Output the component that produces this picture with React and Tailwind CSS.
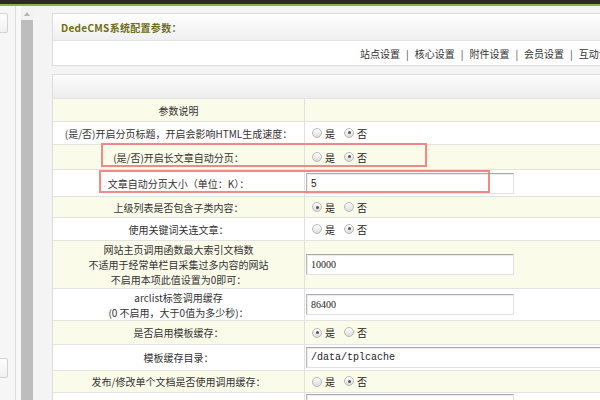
import React from 'react';

const cjk = "font-['Noto_Sans_CJK_SC','Liberation_Sans',sans-serif]";

function Radio({ checked }) {
  return (
    <span className="relative inline-block w-[10px] h-[10px] rounded-full border border-[#b9b9b9] bg-gradient-to-b from-[#fdfdfd] to-[#dcdcdc]">
      {checked && <span className="absolute left-[2.5px] top-[2.5px] w-[3px] h-[3px] rounded-full bg-[#555]" />}
    </span>
  );
}

function YesNo({ yes }) {
  return (
    <div className="flex items-center text-[10px] text-[#222]">
      <Radio checked={yes} />
      <span className="ml-[3px]">是</span>
      <span className="ml-[9px]"><Radio checked={!yes} /></span>
      <span className="ml-[3px]">否</span>
    </div>
  );
}

function Field({ value, width = 208, font = "font-['Liberation_Sans',sans-serif]" }) {
  return (
    <div
      className={`h-[21px] bg-white border border-t-[#a9a9a9] border-l-[#b8b8b8] border-r-[#e2e2e2] border-b-[#e2e2e2] shadow-[inset_1px_1px_1px_rgba(0,0,0,0.08)] flex items-center pl-[4px] text-[10px] text-[#222] ${font}`}
      style={{ width }}
    >
      {value}
    </div>
  );
}

const rows = [
  { label: ['(是/否)开启分页标题，开启会影响HTML生成速度：'], h: 23, yes: false },
  { label: ['(是/否)开启长文章自动分页：'], h: 25, yes: false },
  { label: ['文章自动分页大小（单位：K）：'], h: 27, input: '5' },
  { label: ['上级列表是否包含子类内容：'], h: 21, yes: true },
  { label: ['使用关键词关连文章：'], h: 23, yes: false },
  { label: ['网站主页调用函数最大索引文档数', '不适用于经常单栏目采集过多内容的网站', '不启用本项此值设置为0即可：'], h: 48, input: '10000', serif: true },
  { label: ['arclist标签调用缓存', '(0 不启用，大于0值为多少秒)：'], h: 32, input: '86400', serif: true },
  { label: ['是否启用模板缓存：'], h: 24, yes: true },
  { label: ['模板缓存目录：'], h: 26, input: '/data/tplcache', mono: true, wide: true },
  { label: ['发布/修改单个文档是否使用调用缓存：'], h: 22, yes: false },
  { label: [''], h: 24, input: '' },
];

export default function App() {
  return (
    <div className={`relative w-[600px] h-[400px] overflow-hidden bg-[#f4f4f4] flex flex-col ${cjk}`}>
      <div className="h-[4px] bg-[#2a2a28] shrink-0" />
      <div className="h-[2px] bg-[#8cb33f] shrink-0" />

      <div className="flex flex-1 min-h-0">
        {/* left frame edge */}
        <div className="w-[16px] shrink-0 bg-[#f6f6f6] border-r border-[#dcdcdc] relative">
          <div className="absolute left-[-10px] top-[7px] w-[18px] h-[20px] border border-[#d2d2d2] bg-gradient-to-b from-white to-[#f0f0f0] rounded-[2px]" />
          <div className="absolute left-[-10px] top-[352px] w-[18px] h-[20px] border border-[#d2d2d2] bg-gradient-to-b from-white to-[#f0f0f0] rounded-[2px]" />
        </div>
        <div className="w-[5px] shrink-0 bg-[#f8f8f8]" />
        {/* scrollbar */}
        <div className="w-[12px] shrink-0 flex flex-col bg-[#f2f2f2]">
          <div className="h-[14px] flex items-center justify-center pt-[2px]">
            <svg width="6" height="4" viewBox="0 0 6 4"><path d="M0 4 L3 0 L6 4 Z" fill="#b5b5b5" /></svg>
          </div>
          <div className="flex-1 bg-[#bdbdbd]" />
        </div>
        <div className="w-[19px] shrink-0 bg-[#f4f4f4]" />

        {/* main */}
        <div className="flex-1 min-w-0 pt-[7px]">
          <div className="w-[620px] border border-[#dddddd] bg-white">
            <div className="h-[27px] bg-gradient-to-b from-white to-[#efefef] border-b border-[#e4e4e4] flex items-center pl-[8px]">
              <span className="text-[10px] font-bold text-[#6e6e14] tracking-[0.3px]">DedeCMS系统配置参数：</span>
            </div>
            <div className="h-[24px] flex items-center pl-[307px] text-[10px] text-[#333] whitespace-nowrap">
              {['站点设置', '核心设置', '附件设置', '会员设置', '互动设置'].map((t, i) => (
                <React.Fragment key={t}>
                  {i > 0 && <span className="mx-[6px] text-[#444]">|</span>}
                  <span>{t}</span>
                </React.Fragment>
              ))}
            </div>
          </div>

          <div className="mt-[8px] w-[620px] border border-[#dddddd] bg-white">
            <div className="h-[24px] bg-gradient-to-b from-[#fcfcfc] to-[#ededed] border-b border-[#e2e2e2]" />
            <div className="grid grid-cols-[252px_1fr] h-[23px] bg-[#fafbe9] border-b border-[#e3e3e3]">
              <div className="border-r border-[#e0e0e0] flex items-center justify-center text-[10px] text-[#333]">参数说明</div>
              <div />
            </div>
            {rows.map((r, i) => (
              <div
                key={i}
                className={`grid grid-cols-[252px_1fr] border-b border-[#e3e3e3] ${i % 2 === 0 ? 'bg-white' : 'bg-[#fafbe9]'}`}
                style={{ height: r.h }}
              >
                <div className="border-r border-[#e0e0e0] flex flex-col items-center justify-center text-[10px] leading-[15px] text-[#333] whitespace-nowrap">
                  {r.label.map((l, j) => <div key={j}>{l}</div>)}
                </div>
                <div className="flex items-center pl-[1px]">
                  {r.input !== undefined ? (
                    <Field
                      value={r.input}
                      width={r.wide ? 320 : 208}
                      font={r.mono ? "font-['Liberation_Mono',monospace] text-[8.5px]" : r.serif ? "font-['Liberation_Serif',serif]" : "font-['Liberation_Sans',sans-serif]"}
                    />
                  ) : (
                    <div className="pl-[6px]"><YesNo yes={r.yes} /></div>
                  )}
                </div>
              </div>
            ))}
          </div>
        </div>
      </div>

      {/* annotation boxes */}
      <div className="absolute left-[101px] top-[143px] w-[326px] h-[24px] border-2 border-[#f07c7c] opacity-90" />
      <div className="absolute left-[99px] top-[170px] w-[391px] h-[23px] border-2 border-[#f07c7c] opacity-90" />
    </div>
  );
}
